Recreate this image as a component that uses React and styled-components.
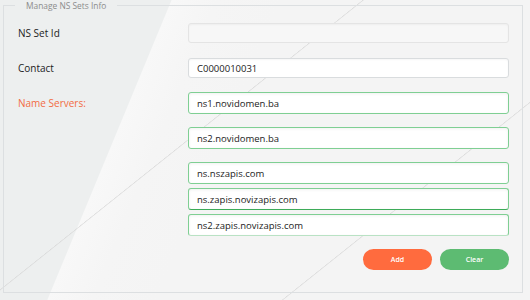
import React from "react";
import styled, { createGlobalStyle, css } from "styled-components";

const GlobalStyle = createGlobalStyle`
    html, body {
        margin: 0;
        padding: 0;
        background: #f4f4f4;
    }
    * {
        box-sizing: border-box;
    }
`;

const servers = [
    { value: "ns1.novidomen.ba" },
    { value: "ns2.novidomen.ba" },
    { value: "ns.nszapis.com" },
    { value: "ns.zapis.novizapis.com", tight: true, focused: true },
    { value: "ns2.zapis.novizapis.com", tight: true, faded: true }
];

const App = () => {
    return (
        <Page>
            <GlobalStyle />
            <Fieldset>
                <Legend>Manage NS Sets Info</Legend>
                <Row>
                    <Label>NS Set Id</Label>
                    <Field $muted readOnly value="" />
                </Row>
                <Row $space={15}>
                    <Label>Contact</Label>
                    <Field readOnly value="C0000010031" />
                </Row>
                <Row $space={14} $top>
                    <Label $accent $tall>Name Servers:</Label>
                    <ServerList>
                        {servers.map((s, i) => (
                            <ServerField
                                key={i}
                                readOnly
                                value={s.value}
                                $tight={s.tight}
                                $focused={s.focused}
                                $faded={s.faded}
                            />
                        ))}
                    </ServerList>
                </Row>
                <Actions>
                    <PillButton type="button">Add</PillButton>
                    <PillButton type="button" $green>Clear</PillButton>
                </Actions>
            </Fieldset>
        </Page>
    );
};

const Page = styled.div`
    width: 530px;
    height: 300px;
    overflow: hidden;
    font-family: "Open Sans", "Noto Sans", sans-serif;
    background-color: #f4f4f4;
    background-image:
        linear-gradient(141.4deg,
            transparent 226px, rgba(214, 214, 214, 0.8) 226.5px, transparent 227.5px,
            transparent 410px, rgba(214, 214, 214, 0.8) 410.5px, transparent 411.5px),
        linear-gradient(112.5deg,
            #edefef 0, #edefef 158px, #f8f8f8 159px, #f5f5f5 200px, #f4f4f4 260px);
`;

const Fieldset = styled.fieldset`
    width: 520px;
    margin: 0 0 0 3px;
    padding: 12px 13px 22px 14px;
    border: 1px solid #dcdfe1;
    min-width: 0;
`;

const Legend = styled.legend`
    margin-left: -3px;
    padding: 0 11px;
    font-size: 8.4px;
    line-height: 11px;
    color: #8c8c8c;
`;

const Row = styled.div`
    display: grid;
    grid-template-columns: 170px 321px;
    align-items: ${({ $top }) => ($top ? "start" : "center")};
    margin-top: ${({ $space }) => ($space || 0)}px;
`;

const Label = styled.label`
    font-size: 10px;
    line-height: ${({ $tall }) => ($tall ? 22 : 20)}px;
    color: ${({ $accent }) => ($accent ? "#f26b43" : "#222")};
`;

const inputBase = css`
    display: block;
    width: 100%;
    margin: 0;
    padding: 0 8px;
    border-radius: 3px;
    font-family: "Open Sans", "Noto Sans", sans-serif;
    font-size: 9.5px;
    color: #222;
    outline: none;
`;

const Field = styled.input`
    ${inputBase}
    height: 20px;
    border: 1px solid ${({ $muted }) => ($muted ? "#e4e4e4" : "#d9dcde")};
    background: ${({ $muted }) => ($muted ? "#f7f7f7" : "#fff")};
    box-shadow: inset 0 1px 2px rgba(0, 0, 0, 0.04);
`;

const ServerList = styled.div`
    display: flex;
    flex-direction: column;
`;

const ServerField = styled.input`
    ${inputBase}
    height: 22px;
    margin-top: ${({ $tight }) => ($tight ? 4 : 13)}px;
    background: #fff;
    border: 1px solid #7fcf93;
    border-bottom-color: ${({ $focused, $faded }) => ($focused ? "#3dab59" : $faded ? "#b9e2c4" : "#7fcf93")};
    box-shadow: inset 0 1px 3px rgba(0, 0, 0, 0.06);
    &:first-child {
        margin-top: 0;
    }
`;

const Actions = styled.div`
    display: flex;
    justify-content: flex-end;
    gap: 8px;
    margin-top: 13px;
`;

const PillButton = styled.button`
    width: 69px;
    height: 21px;
    border: none;
    border-radius: 11px;
    padding: 0;
    font-family: "Open Sans", "Noto Sans", sans-serif;
    font-size: 7px;
    font-weight: 600;
    color: #fff;
    background: ${({ $green }) => ($green ? "#5dbb72" : "#ff6b3e")};
    cursor: pointer;
`;

export default App;
